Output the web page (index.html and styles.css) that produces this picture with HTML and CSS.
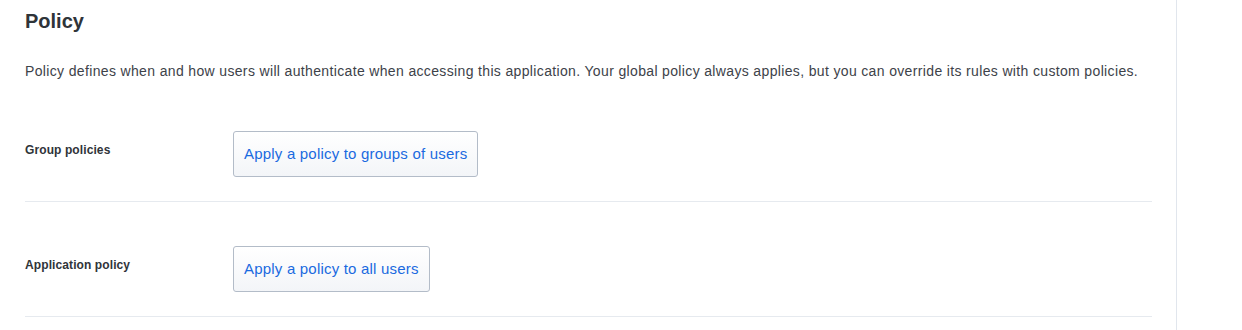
FILE: index.html
```html
<!DOCTYPE html>
<html>
<head>
    <title>Application - Policy</title>
    <meta charset="UTF-8">
    <meta name="viewport" content="width=device-width, initial-scale=1.0">
    <link rel="stylesheet" href="styles.css">
</head>
<body>
    <div class="page">
        <main class="main">
            <h2 class="title">Policy</h2>
            <p class="intro">Policy defines when and how users will authenticate when accessing this application. Your global policy always applies, but you can override its rules with custom policies.</p>

            <!-- Group policies row -->
            <div class="row">
                <div class="label">Group policies</div>
                <button class="btn" type="button">Apply a policy to groups of users</button>
            </div>

            <!-- Application policy row -->
            <div class="row">
                <div class="label">Application policy</div>
                <button class="btn" type="button">Apply a policy to all users</button>
            </div>
        </main>
        <aside class="side"></aside>
    </div>
</body>
</html>
```

FILE: styles.css
```css
/* CSS styles */
body {
    margin: 0;
    font-family: "Liberation Sans", Arial, Helvetica, sans-serif;
    background-color: #fff;
    color: #3b4047;
}

.page {
    display: flex;
    min-height: 100vh;
}

.main {
    box-sizing: border-box;
    width: 1177px;
    flex-shrink: 0;
    padding: 9px 24px 0 25px;
    border-right: 1px solid #e1e6ed;
}

.side {
    flex: 1;
}

.title {
    margin: 0;
    font-size: 20px;
    line-height: 24px;
    font-weight: bold;
    color: #2f3439;
}

.intro {
    margin: 28px 0 6px;
    font-size: 14px;
    line-height: 20px;
    letter-spacing: 0.35px;
    color: #3d4249;
}

.row {
    display: flex;
    align-items: flex-start;
    padding: 44px 0 24px;
    border-bottom: 1px solid #e6eaef;
}

.label {
    width: 208px;
    flex-shrink: 0;
    padding-top: 11px;
    font-size: 12px;
    line-height: 16px;
    font-weight: bold;
    letter-spacing: 0.1px;
    color: #2f3439;
}

.btn {
    font-family: inherit;
    font-size: 15px;
    line-height: 16px;
    letter-spacing: 0.2px;
    padding: 14px 10px;
    color: #1a6ae0;
    background: linear-gradient(#ffffff, #f3f5f8);
    border: 1px solid #b3bcc8;
    border-radius: 3px;
    cursor: pointer;
}

.btn:hover {
    background: #f0f3f6;
}
```
